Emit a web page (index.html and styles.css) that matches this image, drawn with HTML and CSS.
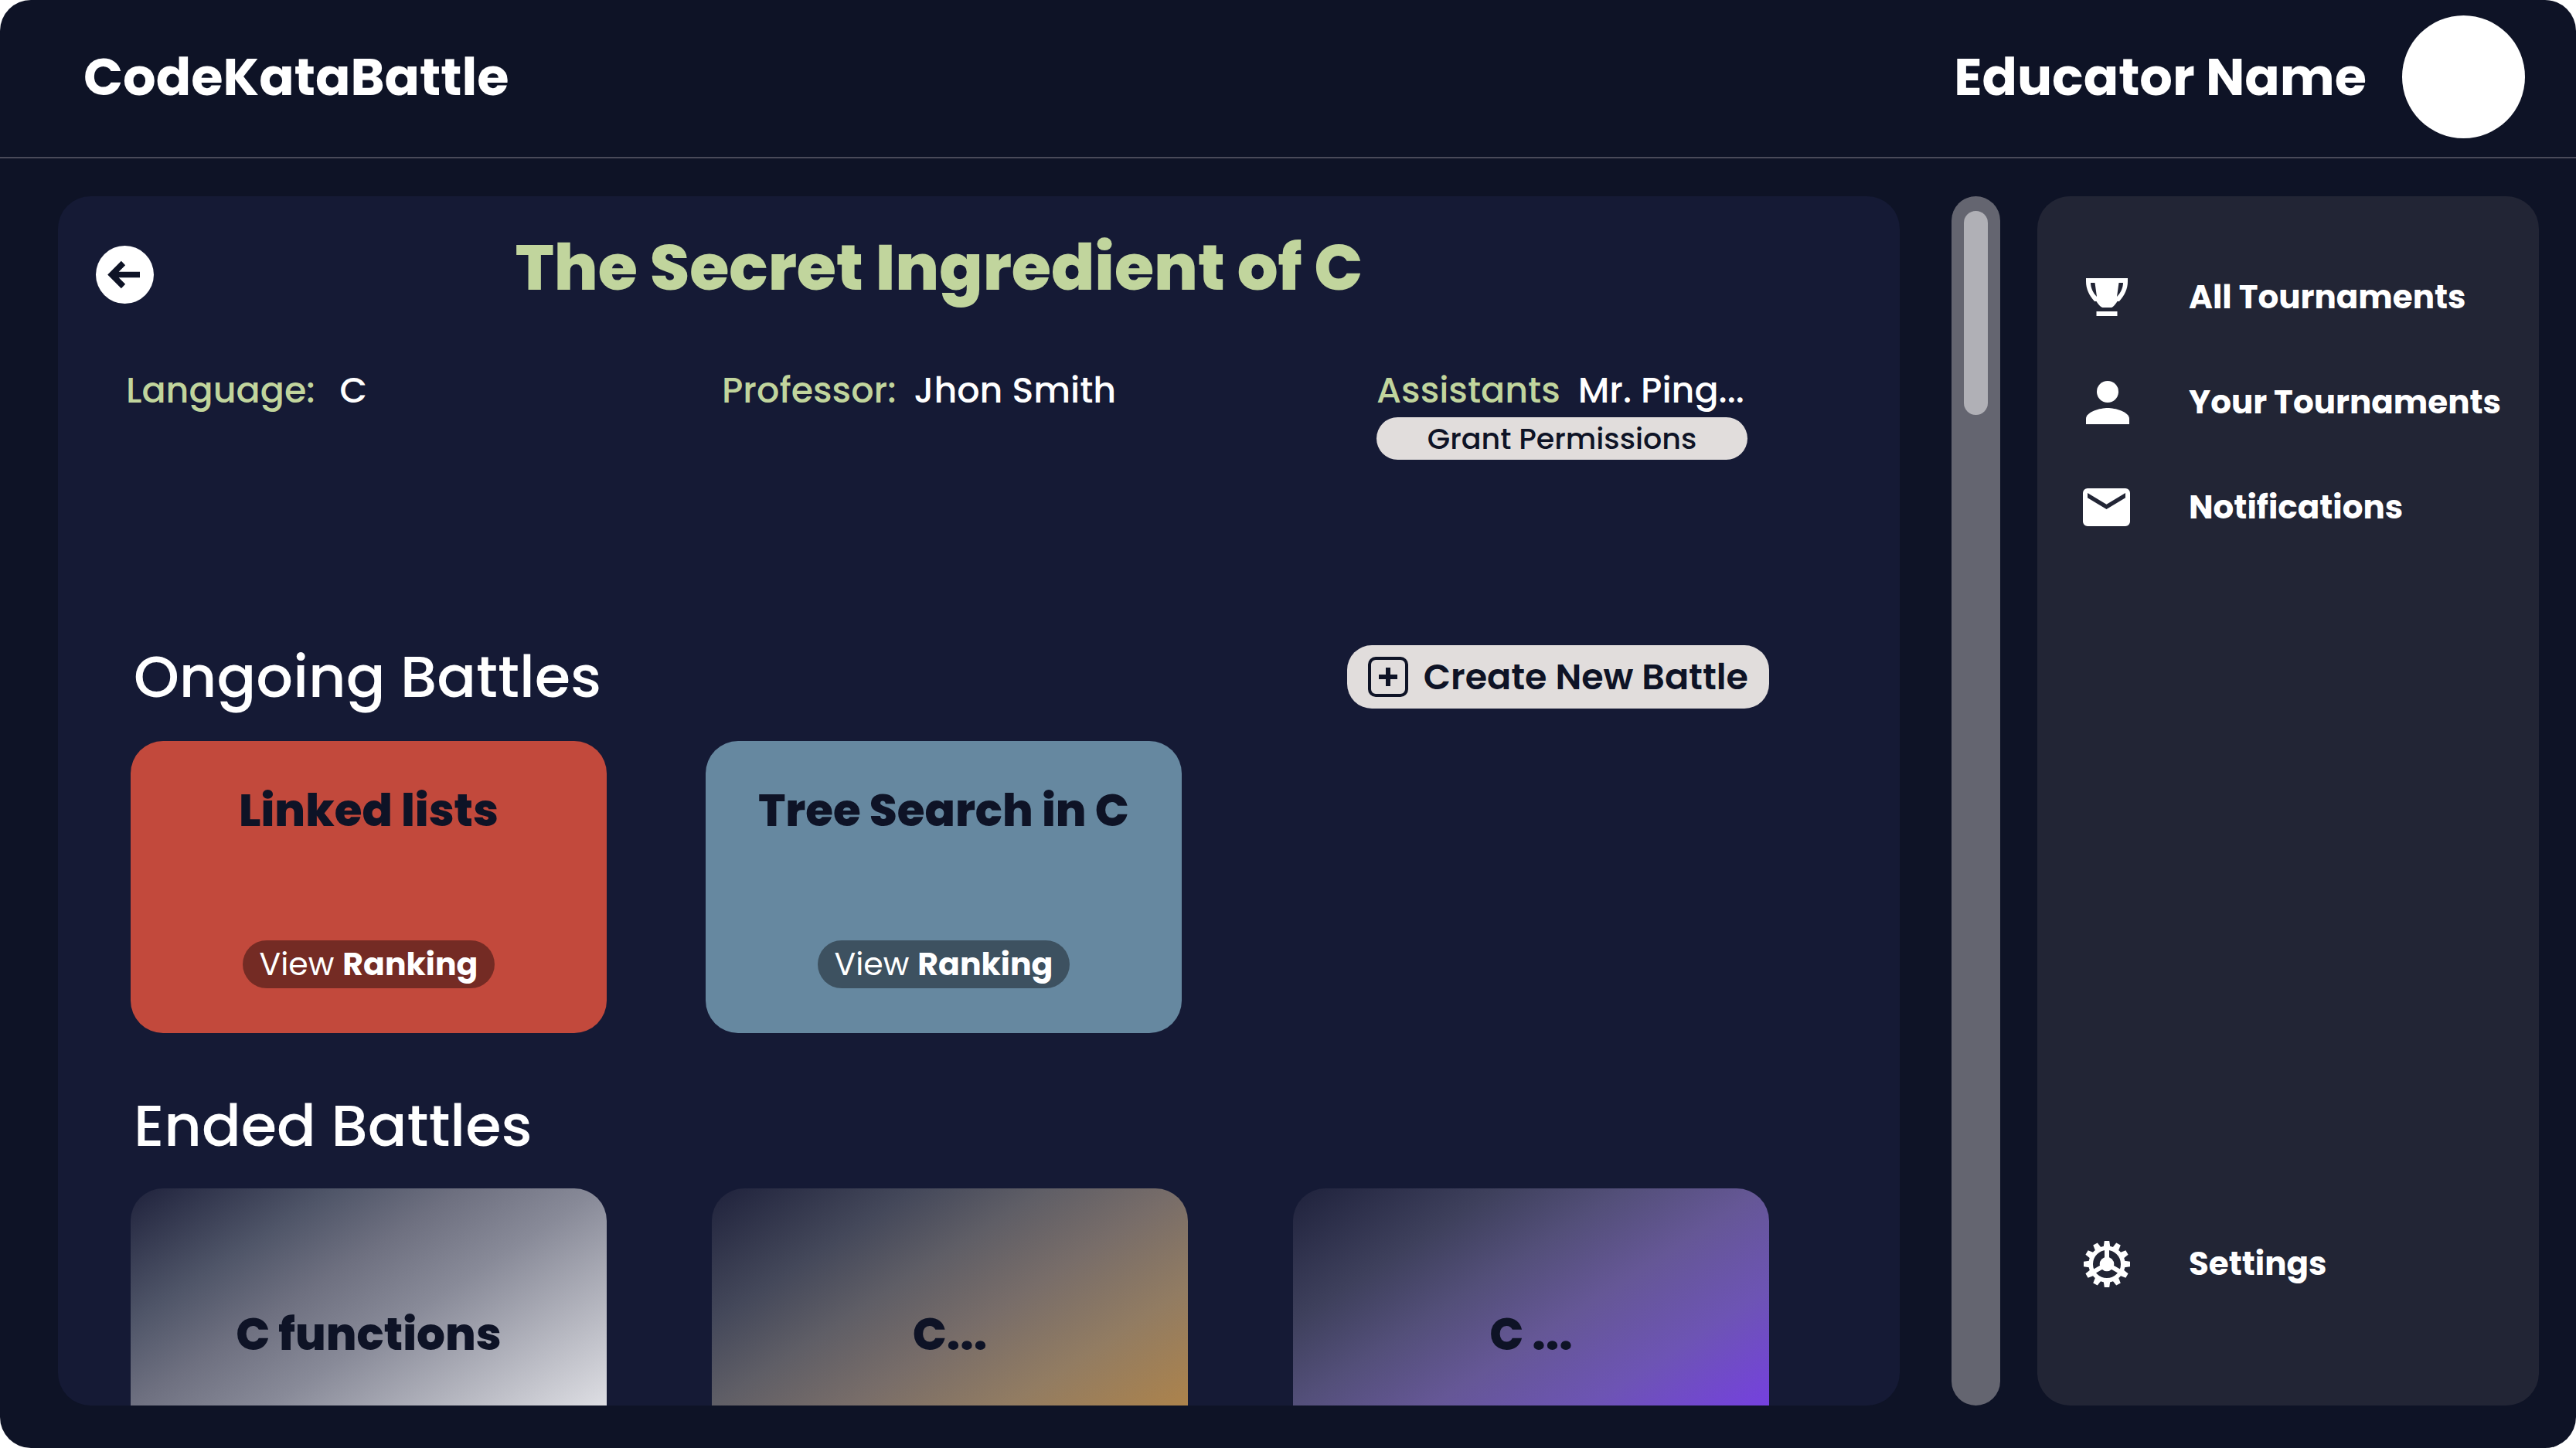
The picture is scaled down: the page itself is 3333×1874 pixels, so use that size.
FILE: index.html
```html
<!DOCTYPE html>
<html lang="en">
<head>
<meta charset="utf-8">
<meta name="viewport" content="width=device-width, initial-scale=1">
<title>CodeKataBattle</title>
<link rel="stylesheet" href="styles.css">
</head>
<body>
<div class="app">
  <header class="topbar">
    <div class="brand">CodeKataBattle</div>
    <div class="user">
      <span class="user-name">Educator Name</span>
      <span class="avatar"></span>
    </div>
  </header>

  <div class="layout">
    <main class="panel">
      <div class="panel-head">
        <button class="back" type="button" aria-label="Back">
          <svg viewBox="0 0 75 75" aria-hidden="true"><path d="M57 37.500H22M35.500 22.500L20.500 37.500L35.500 52.500" fill="none" stroke="currentColor" stroke-width="7.500"/></svg>
        </button>
        <h1 class="title">The Secret Ingredient of C</h1>
      </div>

      <div class="meta">
        <p class="meta-item wide"><span class="meta-label">Language:</span><span>C</span></p>
        <p class="meta-item"><span class="meta-label">Professor:</span><span>Jhon Smith</span></p>
        <div class="assistants">
          <p class="meta-item"><span class="meta-label">Assistants</span><span>Mr. Ping...</span></p>
          <button class="grant" type="button">Grant Permissions</button>
        </div>
      </div>

      <section class="battles">
        <div class="section-head">
          <h2 class="section-title">Ongoing Battles</h2>
          <button class="create" type="button">
            <svg class="create-icon" viewBox="0 0 52 52" aria-hidden="true"><rect x="2" y="2" width="48" height="48" rx="8" fill="none" stroke="currentColor" stroke-width="4"/><path d="M26 14V38M14 26H38" stroke="currentColor" stroke-width="6"/></svg>
            <span>Create New Battle</span>
          </button>
        </div>
        <div class="cards ongoing">
          <article class="card red">
            <h3 class="card-title">Linked lists</h3>
            <a class="ranking" href="#">View <b>Ranking</b></a>
          </article>
          <article class="card blue">
            <h3 class="card-title">Tree Search in C</h3>
            <a class="ranking" href="#">View <b>Ranking</b></a>
          </article>
        </div>
      </section>

      <section class="battles ended-battles">
        <h2 class="section-title">Ended Battles</h2>
        <div class="cards ended">
          <article class="card silver"><h3 class="card-title">C functions</h3></article>
          <article class="card gold"><h3 class="card-title">C...</h3></article>
          <article class="card violet"><h3 class="card-title">C ...</h3></article>
        </div>
      </section>
    </main>

    <div class="track"><div class="thumb"></div></div>

    <nav class="sidebar">
      <a class="nav-item" href="#">
        <svg class="nav-icon" viewBox="-4 -6 62 62" aria-hidden="true"><path fill="currentColor" fill-rule="evenodd" d="M0 0H54V4C54 14 50 22 43 30H40.500C38.500 33 36 37 33 38H21.500C18 37 15.500 33 13.500 30H11C4 22 0 14 0 4ZM6 6C6 12 9 19 14 24L11.500 6ZM48 6H42.500L40 24C45 19 48 12 48 6ZM13.500 43H40.500V49H13.500Z"/></svg>
        <span>All Tournaments</span>
      </a>
      <a class="nav-item" href="#">
        <svg class="nav-icon" viewBox="-4 -3 62 62" aria-hidden="true"><circle cx="28" cy="14" r="14" fill="currentColor"/><path fill="currentColor" d="M0 56V49C0 39.700 18.700 35 28 35S56 39.700 56 49V56Z"/></svg>
        <span>Your Tournaments</span>
      </a>
      <a class="nav-item" href="#">
        <svg class="nav-icon" viewBox="0 -6 62 62" aria-hidden="true"><path fill="currentColor" fill-rule="evenodd" d="M6 0H55A6 6 0 0 1 61 6V43A6 6 0 0 1 55 49H6A6 6 0 0 1 0 43V6A6 6 0 0 1 6 0ZM6 6V12.300L30.500 27L55 12.300V6L30.500 20.700Z"/></svg>
        <span>Notifications</span>
      </a>
      <a class="nav-item settings" href="#">
        <svg class="nav-icon" viewBox="-31 -31 62 62" aria-hidden="true">
          <defs><path id="tooth" d="M-4.500 -21L-3.200 -30H3.200L4.500 -21Z"/><path id="spoke" d="M-3 -20H3V-5H-3Z"/></defs>
          <g fill="currentColor">
            <circle r="9.300"/>
            <use href="#spoke"/><use href="#spoke" transform="rotate(120)"/><use href="#spoke" transform="rotate(240)"/>
            <use href="#tooth"/><use href="#tooth" transform="rotate(30)"/><use href="#tooth" transform="rotate(60)"/><use href="#tooth" transform="rotate(90)"/><use href="#tooth" transform="rotate(120)"/><use href="#tooth" transform="rotate(150)"/><use href="#tooth" transform="rotate(180)"/><use href="#tooth" transform="rotate(210)"/><use href="#tooth" transform="rotate(240)"/><use href="#tooth" transform="rotate(270)"/><use href="#tooth" transform="rotate(300)"/><use href="#tooth" transform="rotate(330)"/>
          </g>
          <circle r="20.800" fill="none" stroke="currentColor" stroke-width="5.600"/>
        </svg>
        <span>Settings</span>
      </a>
    </nav>
  </div>
</div>
</body>
</html>
```

FILE: styles.css
```css
*, *::before, *::after { box-sizing: border-box; }

:root {
  --ink: #0e1326;
  --panel: #151a35;
  --side: #222535;
  --green: #c1d59d;
  --button: #e1dddc;
}

body {
  margin: 0;
  background: #fff;
  color: #fff;
  font-family: "Poppins", "Inter", sans-serif;
}

h1, h2, h3, p { margin: 0; }
button { border: 0; padding: 0; font: inherit; cursor: pointer; }
a { color: inherit; text-decoration: none; }
svg { display: block; }

.app {
  display: flex;
  flex-direction: column;
  height: 100vh;
  border-radius: 40px;
  background: var(--ink);
  overflow: hidden;
}

.topbar {
  display: flex;
  justify-content: space-between;
  align-items: center;
  height: 205px;
  flex: none;
  padding: 0 66px 4px 108px;
  border-bottom: 2px solid #494a59;
}

.brand, .user-name { font-size: 67px; font-weight: 700; line-height: 80px; white-space: nowrap; }
.user { display: flex; align-items: center; gap: 46px; }
.avatar { width: 159px; height: 159px; border-radius: 50%; background: #fff; }

.layout {
  display: flex;
  flex: 1;
  min-height: 0;
  padding: 49px 48px 55px 75px;
}

.panel {
  flex: 1;
  min-width: 0;
  padding: 48px 169px 0 94px;
  border-radius: 42px;
  background: var(--panel);
  overflow-y: auto;
  scrollbar-width: none;
}

.panel-head {
  display: flex;
  align-items: flex-end;
  height: 91px;
  margin: 0 58px 0 -45px;
}

.back { width: 75px; height: 75px; border-radius: 50%; background: #fff; color: var(--ink); }
.title {
  flex: 1;
  align-self: flex-start;
  color: var(--green);
  font-size: 83px;
  font-weight: 800;
  line-height: 88px;
  text-align: center;
}

.meta {
  display: grid;
  grid-template-columns: 771fr 847fr 508fr;
  margin: 82px 0 0 -6px;
  font-size: 46px;
  font-weight: 500;
  line-height: 60px;
}
.meta-item { display: flex; gap: 23px; white-space: nowrap; }
.meta-item.wide { gap: 32px; }
.meta-label { color: var(--green); }
.assistants { display: flex; flex-direction: column; align-items: flex-start; gap: 5px; }
.grant {
  width: 480px;
  height: 55px;
  border-radius: 28px;
  background: var(--button);
  color: var(--ink);
  font-size: 38px;
  line-height: 55px;
}

.battles { margin-top: 240px; }
.section-head { display: flex; justify-content: space-between; align-items: center; }
.section-title { padding-left: 4px; font-size: 75px; font-weight: 500; line-height: 82px; }
.create {
  display: flex;
  align-items: center;
  gap: 20px;
  height: 82px;
  padding: 0 27px;
  border-radius: 32px;
  background: var(--button);
  color: var(--ink);
  font-size: 46px;
  font-weight: 600;
}
.create-icon { width: 52px; height: 52px; }

.cards { display: grid; grid-template-columns: repeat(3, 1fr); }
.ongoing { gap: 128px; margin-top: 42px; padding-right: 16px; }
.ended-battles { margin-top: 79px; }
.ended { gap: 136px; margin-top: 40px; }

.card {
  display: flex;
  flex-direction: column;
  align-items: center;
  justify-content: space-between;
  height: 378px;
  padding: 54px 24px 58px;
  border-radius: 42px;
  color: var(--ink);
}
.card-title { font-size: 58px; font-weight: 800; line-height: 72px; white-space: nowrap; }
.ranking {
  padding: 0 22px;
  border-radius: 31px;
  background: rgba(0, 0, 0, .4);
  color: #fff;
  font-size: 41px;
  font-weight: 400;
  line-height: 62px;
  white-space: nowrap;
}
.ranking b { font-weight: 700; }
.red { background: #c2493c; }
.blue { background: #6688a0; }

.ended .card { justify-content: center; padding: 58px 24px; }
.silver { background: linear-gradient(147deg, #1f223c, #4f5568 22%, #6e7080 36%, #888a98 51%, #fbfbfd); }
.gold { background: linear-gradient(147deg, #1f223c, #44485a 22%, #5f5e66 36%, #786d69 51%, #927c62 68%, #ad834b 88%); }
.violet { background: linear-gradient(147deg, #1f223c, #3e405c 22%, #534f79 36%, #655796 51%, #6d54b4 68%, #7540e0 88%); }

.track {
  flex: none;
  width: 63px;
  margin: 0 48px 0 67px;
  padding: 19px 16px;
  border-radius: 32px;
  background: #646570;
}
.thumb { height: 264px; border-radius: 16px; background: #b0b0b6; }

.sidebar {
  display: flex;
  flex-direction: column;
  gap: 56px;
  flex: none;
  width: 649px;
  padding: 91px 40px 143px 59px;
  border-radius: 42px;
  background: var(--side);
}
.nav-item {
  display: flex;
  align-items: center;
  gap: 75px;
  font-size: 42px;
  font-weight: 700;
  line-height: 80px;
  white-space: nowrap;
}
.nav-icon { width: 62px; height: 62px; flex: none; }
.settings { margin-top: auto; }
```
